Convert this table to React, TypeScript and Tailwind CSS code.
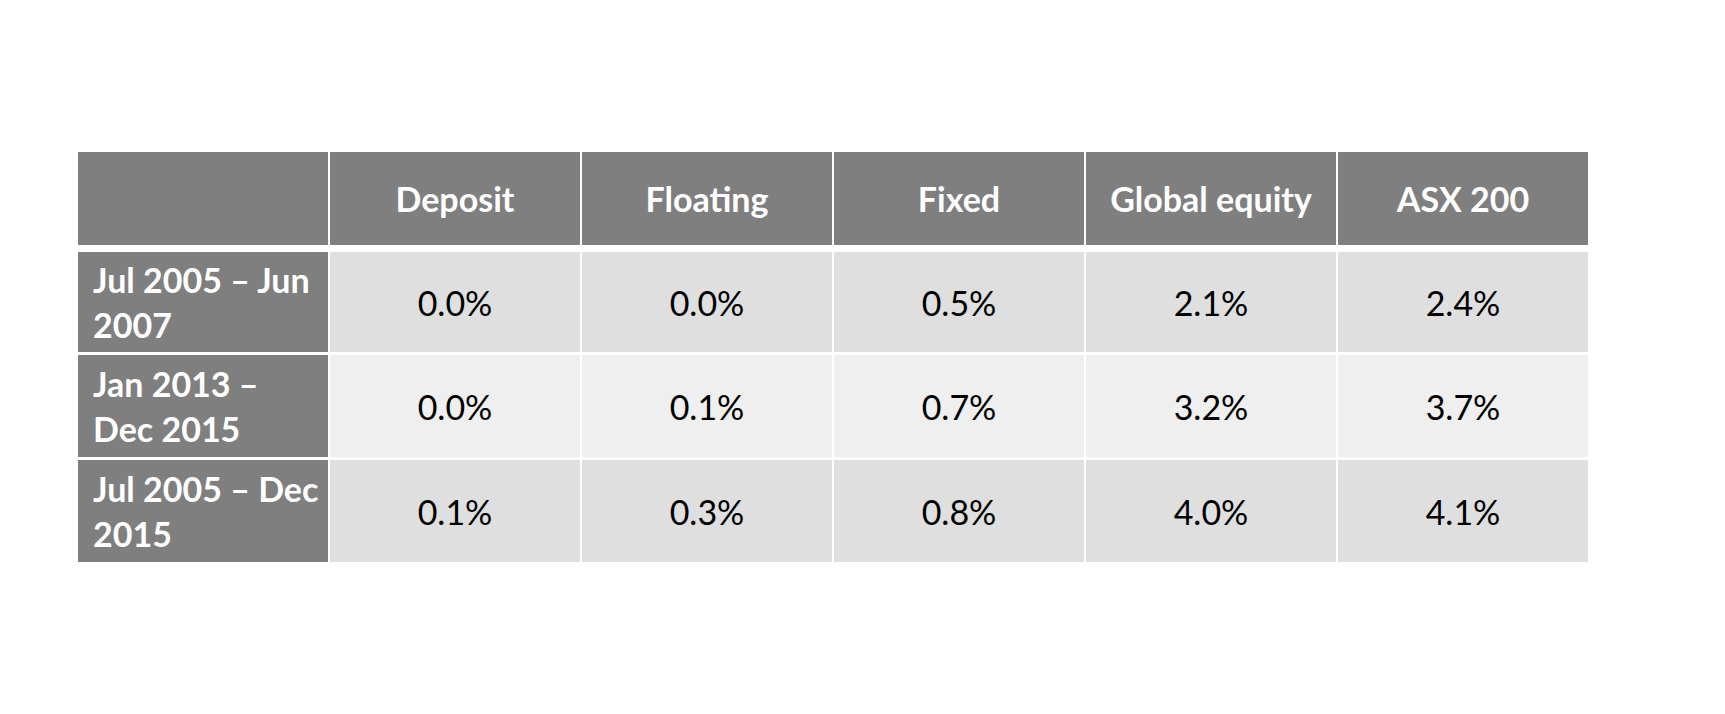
import React from "react";

const headers = ["Deposit", "Floating", "Fixed", "Global equity", "ASX 200"];
const rows: { label: [string, string]; values: string[]; bg: string }[] = [
  { label: ["Jul 2005 – Jun", "2007"], values: ["0.0%", "0.0%", "0.5%", "2.1%", "2.4%"], bg: "bg-[#dfdfdf]" },
  { label: ["Jan 2013 –", "Dec 2015"], values: ["0.0%", "0.1%", "0.7%", "3.2%", "3.7%"], bg: "bg-[#efefef]" },
  { label: ["Jul 2005 – Dec", "2015"], values: ["0.1%", "0.3%", "0.8%", "4.0%", "4.1%"], bg: "bg-[#dfdfdf]" },
];
const heights = ["h-[100px]", "h-[102px]", "h-[102px]"];

export default function App() {
  return (
    <div className="w-[1725px] h-[714px] bg-white pl-[78px] pt-[152px]" style={{ fontFamily: "Lato, 'Open Sans', sans-serif" }}>
      <div className="flex flex-col w-[1510px]">
        <div className="grid grid-cols-[repeat(6,250px)] gap-x-[2px] h-[93px]">
          <div className="bg-[#7f7f7f]" />
          {headers.map((h) => (
            <div key={h} className="bg-[#7f7f7f] flex items-center justify-center text-white font-bold text-[34px]">
              {h}
            </div>
          ))}
        </div>
        <div className="flex flex-col gap-y-[3px] mt-[7px]">
          {rows.map((r, i) => (
            <div key={i} className={`grid grid-cols-[repeat(6,250px)] gap-x-[2px] ${heights[i]}`}>
              <div className="bg-[#7f7f7f] flex flex-col justify-center pl-[15px] text-white font-bold text-[34px] leading-[45px] whitespace-nowrap">
                <span>{r.label[0]}</span>
                <span>{r.label[1]}</span>
              </div>
              {r.values.map((v, j) => (
                <div key={j} className={`${r.bg} flex items-center justify-center text-black text-[34px]`}>
                  {v}
                </div>
              ))}
            </div>
          ))}
        </div>
      </div>
    </div>
  );
}
